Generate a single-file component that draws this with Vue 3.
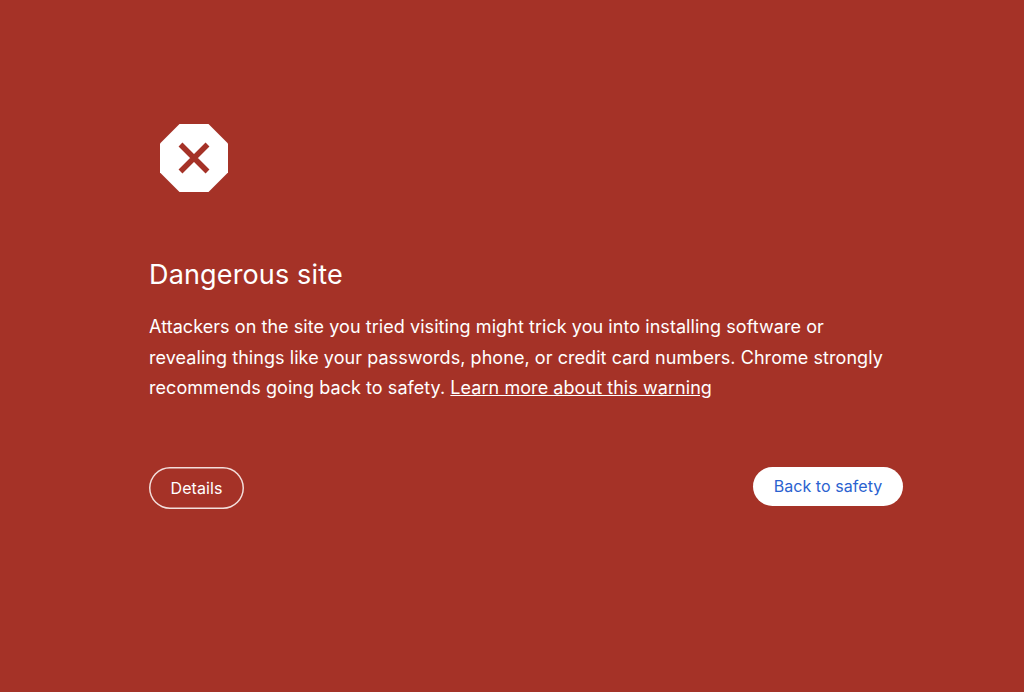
<script setup>
const learnMore = "Learn more about this warning";
</script>

<template>
	<div class="page">
		<div class="content">
			<div class="icon">
				<svg width="68" height="68" viewBox="0 0 68 68">
					<polygon points="19.5,0 48.5,0 68,19.5 68,48.5 48.5,68 19.5,68 0,48.5 0,19.5" fill="#fff" />
					<path d="M20.5 20.5L47.5 47.5M47.5 20.5L20.5 47.5" stroke="#a53227" stroke-width="5.5" fill="none" />
				</svg>
			</div>
			<h1 class="title">Dangerous site</h1>
			<p class="message">
				Attackers on the site you tried visiting might trick you into installing software or
				revealing things like your passwords, phone, or credit card numbers. Chrome strongly
				recommends going back to safety.
				<a class="link">{{ learnMore }}</a>
			</p>
			<div class="actions">
				<button class="btn details">Details</button>
				<button class="btn back">Back to safety</button>
			</div>
		</div>
	</div>
</template>

<style>
html,
body {
	margin: 0;
	background: #a53227;
}
</style>

<style scoped>
.page {
	height: 692px;
	background: #a53227;
	padding: 124px 121px 0 149px;
	box-sizing: border-box;
	font-family: Inter, "Liberation Sans", sans-serif;
	color: #fff;
	overflow: hidden;
}

.content {
	width: 754px;
}

.icon {
	height: 68px;
	padding-left: 11px;
}

.icon svg {
	display: block;
}

.title {
	margin: 64px 0 0;
	font-size: 27px;
	line-height: 38px;
	font-weight: 400;
	letter-spacing: 0.15px;
}

.message {
	margin: 18px 0 0;
	max-width: 740px;
	font-size: 18px;
	line-height: 30.5px;
	letter-spacing: 0.06px;
}

.link {
	color: #fff;
	text-decoration: underline;
}

.actions {
	display: flex;
	justify-content: space-between;
	align-items: flex-start;
	margin-top: 63px;
}

.btn {
	font-family: inherit;
	font-size: 16px;
	letter-spacing: 0.06px;
	border-radius: 21px;
	box-sizing: border-box;
}

.details {
	width: 95px;
	height: 42px;
	padding: 0;
	background: transparent;
	border: none;
	box-shadow: inset 0 0 0 1.5px #f3dedb;
	color: #fff;
}

.back {
	width: 150px;
	height: 39px;
	padding: 0;
	background: #fff;
	border: none;
	color: #2a62d0;
}
</style>
